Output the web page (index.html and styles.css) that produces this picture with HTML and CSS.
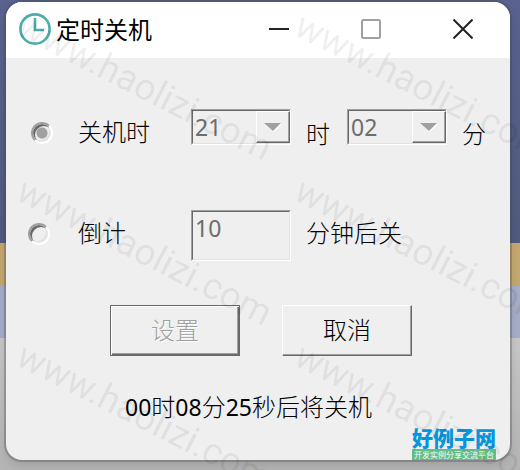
FILE: index.html
```html
<!DOCTYPE html>
<html lang="zh-CN">
<head>
<meta charset="utf-8">
<title>定时关机</title>
<link rel="stylesheet" href="styles.css">
</head>
<body>
<main class="window">
  <header class="titlebar">
    <svg class="clock" viewBox="0 0 32 32" aria-hidden="true"><circle cx="16" cy="16" r="14.6"/><path d="M16 5v12h9"/></svg>
    <h1>定时关机</h1>
    <nav class="controls">
      <button type="button" aria-label="最小化"><svg viewBox="0 0 20 20"><path d="M0 10h20"/></svg></button>
      <button type="button" aria-label="最大化" disabled><svg viewBox="0 0 20 20"><rect x="1" y="1" width="18" height="18" rx="1.5"/></svg></button>
      <button type="button" aria-label="关闭"><svg viewBox="0 0 20 20"><path d="M.5.5l19 19M19.5.5l-19 19"/></svg></button>
    </nav>
  </header>
  <form class="form">
    <div class="row">
      <label class="option option-time"><input type="radio" name="mode" checked disabled><span>关机时</span></label>
      <span class="combo">
        <select aria-label="时" disabled><option>21</option></select>
        <span class="arrow"><svg viewBox="0 0 18 9"><path class="light" d="M1 1h17l-8 8z"/><path d="M0 0h17l-8 8z"/></svg></span>
      </span>
      <span class="unit">时</span>
      <span class="combo">
        <select aria-label="分" disabled><option>02</option></select>
        <span class="arrow"><svg viewBox="0 0 18 9"><path class="light" d="M1 1h17l-8 8z"/><path d="M0 0h17l-8 8z"/></svg></span>
      </span>
      <span class="unit">分</span>
    </div>
    <div class="row row-delay">
      <label class="option"><input type="radio" name="mode" disabled><span>倒计</span></label>
      <span class="edit"><input type="text" value="10" aria-label="分钟" disabled></span>
      <span class="suffix">分钟后关</span>
    </div>
    <div class="actions">
      <button type="button" class="default" disabled>设置</button>
      <button type="button">取消</button>
    </div>
    <p class="status"><b>00</b>时<b>08</b>分<b>25</b>秒后将关机</p>
  </form>
  <div class="brand"><strong>好例子网</strong><span>开发实例分享交流平台</span></div>
</main>
<div class="watermark" aria-hidden="true">
  <span>www.haolizi.com</span><span>www.haolizi.com</span>
  <span>www.haolizi.com</span><span>www.haolizi.com</span>
  <span>www.haolizi.com</span><span>www.haolizi.com</span>
</div>
</body>
</html>
```
FILE: styles.css
```css
* { box-sizing: border-box; }
body {
  margin: 0;
  min-height: 100vh;
  padding: 2px 10px 10px 6px;
  display: flex;
  position: relative;
  background: linear-gradient(#5a638f 0, #525b80 243px, #c6a870 243px, #c6a870 286px, #a7aec8 286px, #a7aec8 338px, #c8c8c8 338px, #b4b4b4 100%);
  font: 24px/32px "Noto Sans CJK SC", sans-serif;
  color: #000;
}
.window {
  flex: 1;
  display: flex;
  flex-direction: column;
  position: relative;
  border-radius: 16px;
  background: #efefef;
  overflow: hidden;
  box-shadow: 0 0 0 2px rgba(70, 70, 75, .3), 0 4px 12px rgba(0, 0, 0, .15);
}
.titlebar {
  height: 56px;
  padding: 0 37px 2px 13px;
  display: flex;
  align-items: center;
  gap: 5px;
  background: #fff;
}
.clock { width: 32px; height: 32px; fill: none; stroke: #4dada8; stroke-width: 2.6; }
h1 { margin: 0; font-size: 24px; font-weight: 400; }
.controls { margin-left: auto; display: flex; gap: 72px; }
.controls button { width: 20px; height: 20px; padding: 0; border: 0; background: none; }
.controls svg { display: block; fill: none; stroke: #222; stroke-width: 2; }
.controls button:disabled svg { stroke: #a0a0a0; }
.form {
  display: flex;
  flex-direction: column;
  padding-top: 51px;
  font-family: "Noto Sans CJK SC", sans-serif;
  font-weight: 300;
}
.row { display: flex; align-items: flex-start; padding-left: 22px; }
.row-delay { margin-top: 53px; }
.option { width: 163px; height: 48px; display: flex; align-items: center; }
.option span { margin-left: 28px; padding-bottom: 4px; }
.option-time { padding-left: 3px; }
.option-time span { margin-left: 25px; }
.option input {
  appearance: none;
  flex: none;
  width: 22px;
  height: 22px;
  margin: 0;
  border: 2px solid;
  border-color: #a0a0a0 #fff #fff #a0a0a0;
  border-radius: 50%;
  box-shadow: inset 2px 2px 0 #696969, inset -2px -2px 0 #e3e3e3;
}
.option input:checked { background: radial-gradient(circle, #a0a0a0 5px, transparent 6px); }
.combo, .edit {
  width: 100px;
  height: 36px;
  display: flex;
  border: 1px solid;
  border-color: #a0a0a0 #fff #fff #a0a0a0;
}
.combo { position: relative; }
.edit { height: 51px; }
.combo select, .edit input {
  appearance: none;
  width: 100%;
  margin: 0;
  padding: 0 2px;
  border: 1px solid;
  border-color: #696969 #e3e3e3 #e3e3e3 #696969;
  border-radius: 0;
  background: none;
  color: #6d6d6d;
  opacity: 1;
  font: 23px/32px "Noto Sans", sans-serif;
}
.edit input { padding-bottom: 16px; }
.arrow {
  position: absolute;
  top: 1px;
  right: 0;
  bottom: 1px;
  width: 34px;
  display: grid;
  place-items: center;
  border: 1px solid;
  border-color: #fff #696969 #696969 #fff;
  box-shadow: inset -1px -1px 0 #a0a0a0;
  background: #efefef;
  pointer-events: none;
}
.arrow svg { width: 18px; height: 9px; fill: #a0a0a0; }
.arrow .light { fill: #fff; }
.unit { width: 56px; padding: 8px 0 0 15px; }
.suffix { padding: 6px 0 0 15px; }
.actions { display: flex; gap: 42px; margin: 44px 0 0 104px; }
.actions button {
  width: 130px;
  height: 51px;
  padding: 0 0 3px;
  border: 1px solid;
  border-color: #fff #696969 #696969 #fff;
  border-radius: 0;
  background: #efefef;
  box-shadow: inset -1px -1px 0 #a0a0a0;
  color: #000;
  font: inherit;
}
.actions .default {
  border-color: #696969;
  box-shadow: inset 1px 1px 0 #fff, inset -1px -1px 0 #696969, inset -2px -2px 0 #a0a0a0;
  color: #a0a0a0;
  text-shadow: 1px 1px 0 #fff;
}
.status { margin: 34px 0 0 119px; }
.status b { font-family: "Noto Sans", sans-serif; font-size: 23px; font-weight: 400; }
.brand {
  position: absolute;
  right: 14px;
  bottom: 0;
  text-align: center;
  color: #0795dc;
}
.brand strong { display: block; font-size: 21px; line-height: 24px; font-weight: 900; }
.brand span {
  display: block;
  padding: 0 2px;
  background: #62bd87;
  color: #fff;
  font-size: 8px;
  line-height: 11px;
}
.watermark {
  position: absolute;
  inset: 0;
  padding-left: 14px;
  overflow: hidden;
  display: grid;
  grid-template-columns: 278px 278px;
  grid-auto-rows: 165px;
  pointer-events: none;
  color: rgba(0, 0, 0, .08);
  font: 37px/44px Roboto, sans-serif;
}
.watermark span { transform: rotate(27deg); transform-origin: 0 34px; white-space: nowrap; height: 44px; }
```
